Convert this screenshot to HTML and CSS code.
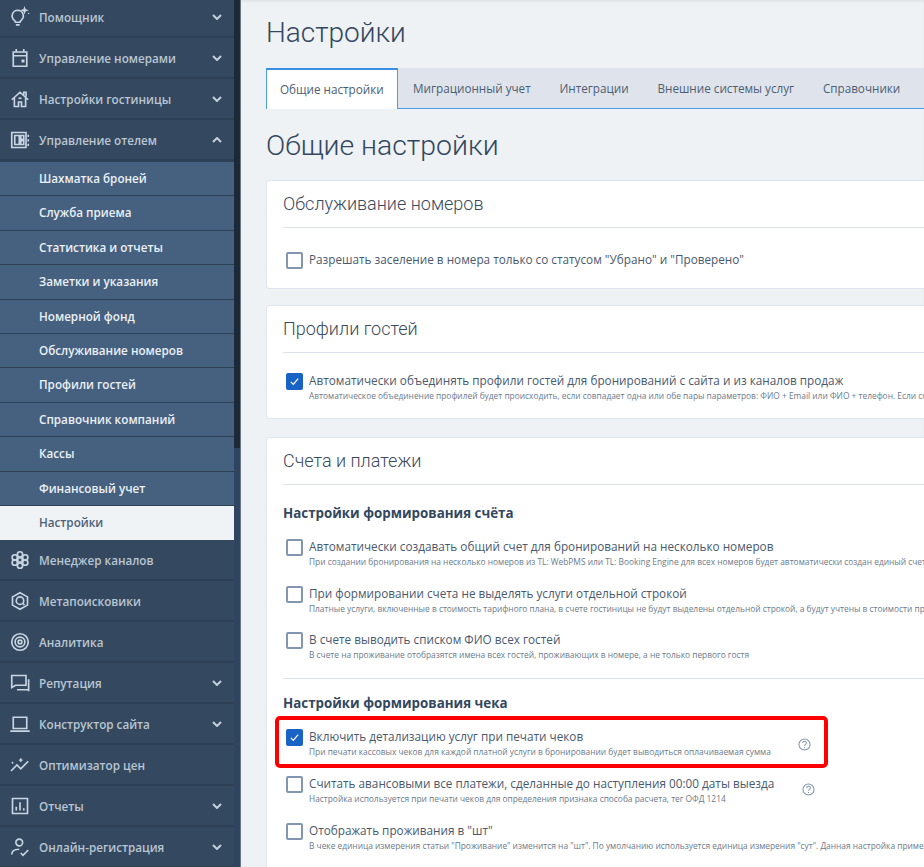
FILE: index.html
```html
<!DOCTYPE html>
<html lang="ru">
<head>
<meta charset="utf-8">
<title>Настройки</title>
<link rel="stylesheet" href="styles.css">
</head>
<body>
<div class="app">
  <aside class="sidebar">
    <nav class="menu">
      <a class="item"><svg class="ico" viewBox="0 0 24 24"><path d="M9 3a7.500 7.500 0 0 0-4.500 13.400c1 .8 1.500 1.600 1.500 2.600h6c0-1 .5-1.800 1.500-2.600A7.500 7.500 0 0 0 9 3zM6.500 22.500h5"/><path class="dot" d="M18 0l.8 2.200 2.200.8-2.200.8-.8 2.200-.8-2.200-2.200-.8 2.200-.8zM23.500 6.500v1.500"/></svg><span class="label">Помощник</span><svg class="chev" viewBox="0 0 10 6"><path d="M1 1l4 4 4-4"/></svg></a>
      <a class="item"><svg class="ico" viewBox="0 0 24 24"><path d="M3 4h18v19H3zM3 9h18M7 0v4M17 0v4"/><path class="fill" d="M14 14h4v4h-4z"/></svg><span class="label">Управление номерами</span><svg class="chev" viewBox="0 0 10 6"><path d="M1 1l4 4 4-4"/></svg></a>
      <a class="item"><svg class="ico" viewBox="0 0 24 24"><path d="M1 13L12 3l11 10M4.500 10.500V22h5.500v-6h4v6h5.500V10.500M17 6.500V3h3v6"/><path d="M10 11h4"/></svg><span class="label">Настройки гостиницы</span><svg class="chev" viewBox="0 0 10 6"><path d="M1 1l4 4 4-4"/></svg></a>
      <a class="item"><svg class="ico" viewBox="0 0 24 24"><path d="M1 2h19v20H1zM5 6h6v12H5zM13 6h4v5h-4zM13 13h4v5h-4zM23 5v3M23 11v3M23 17v3"/></svg><span class="label">Управление отелем</span><svg class="chev" viewBox="0 0 10 6"><path d="M1 5l4-4 4 4"/></svg></a>
      <div class="sub">
        <a class="sub-item">Шахматка броней</a>
        <a class="sub-item">Служба приема</a>
        <a class="sub-item">Статистика и отчеты</a>
        <a class="sub-item">Заметки и указания</a>
        <a class="sub-item">Номерной фонд</a>
        <a class="sub-item">Обслуживание номеров</a>
        <a class="sub-item">Профили гостей</a>
        <a class="sub-item">Справочник компаний</a>
        <a class="sub-item">Кассы</a>
        <a class="sub-item">Финансовый учет</a>
        <a class="sub-item active">Настройки</a>
      </div>
      <a class="item"><svg class="ico" viewBox="0 0 24 24"><circle cx="12" cy="12" r="3"/><circle cx="12" cy="4.500" r="3.500"/><circle cx="12" cy="19.500" r="3.500"/><circle cx="5" cy="8.500" r="3.500"/><circle cx="19" cy="8.500" r="3.500"/><circle cx="5" cy="15.500" r="3.500"/><circle cx="19" cy="15.500" r="3.500"/></svg><span class="label">Менеджер каналов</span></a>
      <a class="item"><svg class="ico" viewBox="0 0 24 24"><path d="M12 1l10 5.500v11L12 23 2 17.500v-11z"/><circle cx="12" cy="11.500" r="5"/><path d="M15.500 15l2.500 2.500"/></svg><span class="label">Метапоисковики</span></a>
      <a class="item"><svg class="ico" viewBox="0 0 24 24"><circle cx="12" cy="12" r="11"/><circle cx="12" cy="12" r="6.500"/><circle cx="12" cy="12" r="2.500"/></svg><span class="label">Аналитика</span></a>
      <a class="item"><svg class="ico" viewBox="0 0 24 24"><path d="M1 2h19v13H6l-5 3zM23.500 7v16M8 21h15.500"/></svg><span class="label">Репутация</span><svg class="chev" viewBox="0 0 10 6"><path d="M1 1l4 4 4-4"/></svg></a>
      <a class="item"><svg class="ico" viewBox="0 0 24 24"><path d="M3 3h18v15H3zM-1 21.500h26"/></svg><span class="label">Конструктор сайта</span><svg class="chev" viewBox="0 0 10 6"><path d="M1 1l4 4 4-4"/></svg></a>
      <a class="item"><svg class="ico" viewBox="0 0 24 24"><path d="M0 20l8-8 5 5 10-10"/><path class="dot" d="M1 8l2 2M13 3v5M10.500 5.500h5"/></svg><span class="label">Оптимизатор цен</span></a>
      <a class="item"><svg class="ico" viewBox="0 0 24 24"><path d="M2 2h20v20H2zM7 18v-5M12 18V7M17 18v-3"/></svg><span class="label">Отчеты</span><svg class="chev" viewBox="0 0 10 6"><path d="M1 1l4 4 4-4"/></svg></a>
      <a class="item"><svg class="ico" viewBox="0 0 24 24"><circle cx="11" cy="6" r="4.500"/><path d="M1 22c0-5 4-7 10-7M13 20l3 3 7-7"/></svg><span class="label">Онлайн-регистрация</span><svg class="chev" viewBox="0 0 10 6"><path d="M1 1l4 4 4-4"/></svg></a>
    </nav>
    <div class="track"><div class="thumb"></div></div>
  </aside>

  <main class="main">
    <h1 class="page-title">Настройки</h1>
    <ul class="tabs">
      <li class="tab current">Общие настройки</li>
      <li class="tab">Миграционный учет</li>
      <li class="tab">Интеграции</li>
      <li class="tab">Внешние системы услуг</li>
      <li class="tab">Справочники</li>
    </ul>
    <h2 class="section-title">Общие настройки</h2>

    <section class="card card-rooms">
      <h3 class="card-title">Обслуживание номеров</h3>
      <div class="card-body">
        <div class="opt"><span class="box"></span><div class="opt-text"><div class="opt-label">Разрешать заселение в номера только со статусом "Убрано" и "Проверено"</div></div></div>
      </div>
    </section>

    <section class="card card-guests">
      <h3 class="card-title">Профили гостей</h3>
      <div class="card-body">
        <div class="opt"><span class="box on"><svg viewBox="0 0 16 16"><path d="M3.500 8.500l3 3 6-7"/></svg></span><div class="opt-text"><div class="opt-label">Автоматически объединять профили гостей для бронирований с сайта и из каналов продаж</div><div class="opt-hint">Автоматическое объединение профилей будет происходить, если совпадает одна или обе пары параметров: ФИО + Email или ФИО + телефон. Если совпадений нет, профили останутся отдельными</div></div></div>
      </div>
    </section>

    <section class="card card-bills">
      <h3 class="card-title">Счета и платежи</h3>
      <div class="card-body">
        <h4 class="group-title">Настройки формирования счёта</h4>
        <div class="opt"><span class="box"></span><div class="opt-text"><div class="opt-label">Автоматически создавать общий счет для бронирований на несколько номеров</div><div class="opt-hint">При создании бронирования на несколько номеров из TL: WebPMS или TL: Booking Engine для всех номеров будет автоматически создан единый счет на оплату всех услуг</div></div></div>
        <div class="opt"><span class="box"></span><div class="opt-text"><div class="opt-label">При формировании счета не выделять услуги отдельной строкой</div><div class="opt-hint">Платные услуги, включенные в стоимость тарифного плана, в счете гостиницы не будут выделены отдельной строкой, а будут учтены в стоимости проживания гостя</div></div></div>
        <div class="opt"><span class="box"></span><div class="opt-text"><div class="opt-label">В счете выводить списком ФИО всех гостей</div><div class="opt-hint">В счете на проживание отобразятся имена всех гостей, проживающих в номере, а не только первого гостя</div></div></div>
        <hr class="rule">
        <h4 class="group-title second">Настройки формирования чека</h4>
        <div class="highlight">
          <div class="opt"><span class="box on"><svg viewBox="0 0 16 16"><path d="M3.500 8.500l3 3 6-7"/></svg></span><div class="opt-text"><div class="opt-label">Включить детализацию услуг при печати чеков</div><div class="opt-hint">При печати кассовых чеков для каждой платной услуги в бронировании будет выводиться оплачиваемая сумма</div></div><svg class="help" viewBox="0 0 14 14"><circle cx="7" cy="7" r="6"/><path d="M5 5.500c0-2.600 4-2.600 4-.2 0 1.500-2 1.500-2 3"/><path d="M7 9.700v1"/></svg></div>
        </div>
        <div class="opt tail"><span class="box"></span><div class="opt-text"><div class="opt-label">Считать авансовыми все платежи, сделанные до наступления 00:00 даты выезда</div><div class="opt-hint">Настройка используется при печати чеков для определения признака способа расчета, тег ОФД 1214</div></div><svg class="help" viewBox="0 0 14 14"><circle cx="7" cy="7" r="6"/><path d="M5 5.500c0-2.600 4-2.600 4-.2 0 1.500-2 1.500-2 3"/><path d="M7 9.700v1"/></svg></div>
        <div class="opt"><span class="box"></span><div class="opt-text"><div class="opt-label">Отображать проживания в "шт"</div><div class="opt-hint">В чеке единица измерения статьи "Проживание" изменится на "шт". По умолчанию используется единица измерения "сут". Данная настройка применяется ко всем чекам гостиницы</div></div></div>
      </div>
    </section>
  </main>
</div>
</body>
</html>
```
FILE: styles.css
```css
* { box-sizing: border-box; }
html, body { margin: 0; height: 100%; overflow: hidden; }
body { font-family: "Open Sans", sans-serif; background: #eef2f5; color: #3a4a5e; }
.app { display: flex; height: 867px; overflow: hidden; }

.sidebar { flex: 0 0 241px; display: flex; height: 867px; overflow: hidden; background: #34495f; border-right: 1px solid #6b7684; }
.menu { width: 234px; flex: none; margin-top: -3px; }
.track { width: 6px; flex: none; background: #2f4461; }
.thumb { height: 448px; background: #1c2937; }

.item { display: flex; align-items: center; height: 41px; border-bottom: 2px solid #2e4056; padding: 0 10px 0 10.500px; color: #b9c5d3; font-size: 11.700px; font-weight: 600; }
.ico { width: 18px; height: 18px; flex: none; margin-right: 10.500px; overflow: visible; fill: none; stroke: #c9d5e3; stroke-width: 2.200; }
.ico .dot { stroke-width: 1.800; }
.ico .fill { fill: #c9d5e3; stroke: none; }
.label { flex: 1; white-space: nowrap; }
.chev { width: 10px; height: 6px; margin-right: 2px; fill: none; stroke: #c3cfdc; stroke-width: 2; }

.sub { background: #46607f; border-top: 1px solid #2e4056; }
.sub-item { display: block; height: 34.400px; line-height: 32px; padding-left: 39px; border-bottom: 1.500px solid #2e4056; color: #eaf0f6; font-size: 11.700px; font-weight: 600; white-space: nowrap; }
.sub-item.active { background: #eff3f6; color: #4d6178; border-bottom: 0; }

.main { flex: 1; min-width: 0; padding: 13px 0 0 25px; overflow: hidden; box-shadow: inset 0 2px 2px rgba(0, 0, 0, .05); }
.page-title { margin: 0; font-family: Roboto, sans-serif; font-weight: 300; font-size: 28px; line-height: 40px; color: #33475e; white-space: nowrap; }
.tabs { display: flex; list-style: none; margin: 15px 0 0; padding: 0; height: 41px; background: #dfe4ec; border-bottom: 1px solid #4a9cec; white-space: nowrap; }
.tab { padding: 0 14.400px; line-height: 40px; font-size: 11.700px; color: #4c5e73; }
.tab.current { height: 41px; margin-right: 1px; background: #fff; border: 1px solid #4a9cec; border-bottom: 0; border-top-width: 2px; border-top-color: #3b8fe3; line-height: 38px; padding: 0 13px; }
.section-title { margin: 17px 0 0; font-family: Roboto, sans-serif; font-weight: 300; font-size: 28.400px; line-height: 40px; color: #33475e; white-space: nowrap; }

.card { width: 700px; background: #fff; border: 1px solid #dfe5ec; border-radius: 3px; padding: 0 16px; }
.card-rooms { height: 109px; margin-top: 14px; }
.card-guests { height: 114px; margin-top: 16px; }
.card-bills { height: 500px; margin-top: 18px; }
.card-title { margin: 0; height: 47px; line-height: 45px; border-bottom: 1px solid #dee3ea; font-family: Roboto, sans-serif; font-weight: 300; font-size: 18px; color: #3a4a5e; white-space: nowrap; }
.card-body { padding-top: 18px; }
.card-rooms .card-body { padding-top: 22px; }
.opt { display: flex; align-items: flex-start; height: 46.500px; white-space: nowrap; }
.box { flex: none; width: 17px; height: 17px; margin: 2px 6px 0 3px; border: 2px solid #8296b2; border-radius: 2px; background: #fff; }
.box.on { background: #1a63c6; border-color: #1a63c6; display: flex; align-items: center; justify-content: center; }
.box.on svg { width: 13px; height: 13px; fill: none; stroke: #fff; stroke-width: 1.500; }
.opt-text { min-width: 0; }
.opt-label { font-size: 11.750px; line-height: 18px; color: #4a5a6e; }
.opt-hint { font-size: 8.370px; line-height: 13px; color: #6b7a8c; }
.group-title { margin: 0 0 14px; font-weight: 700; font-size: 13.350px; line-height: 20px; color: #33475e; white-space: nowrap; }
.rule { border: 0; border-top: 1px solid #dee3ea; margin: 1.500px 0 0; }
.group-title.second { margin: 14px 0 3px; }
.highlight { width: 553px; height: 52px; margin-left: -8px; padding: 7px 0 0 4px; border: 4px solid #f00; border-radius: 5px; }
.highlight .opt { height: 37px; }
.help { width: 13px; height: 13px; flex: none; fill: none; stroke: #7f93ac; stroke-width: 1.100; margin: 11px 0 0 27px; }
.tail { margin-top: 6px; }
.tail .help { margin: 9px 0 0 28px; }
```
